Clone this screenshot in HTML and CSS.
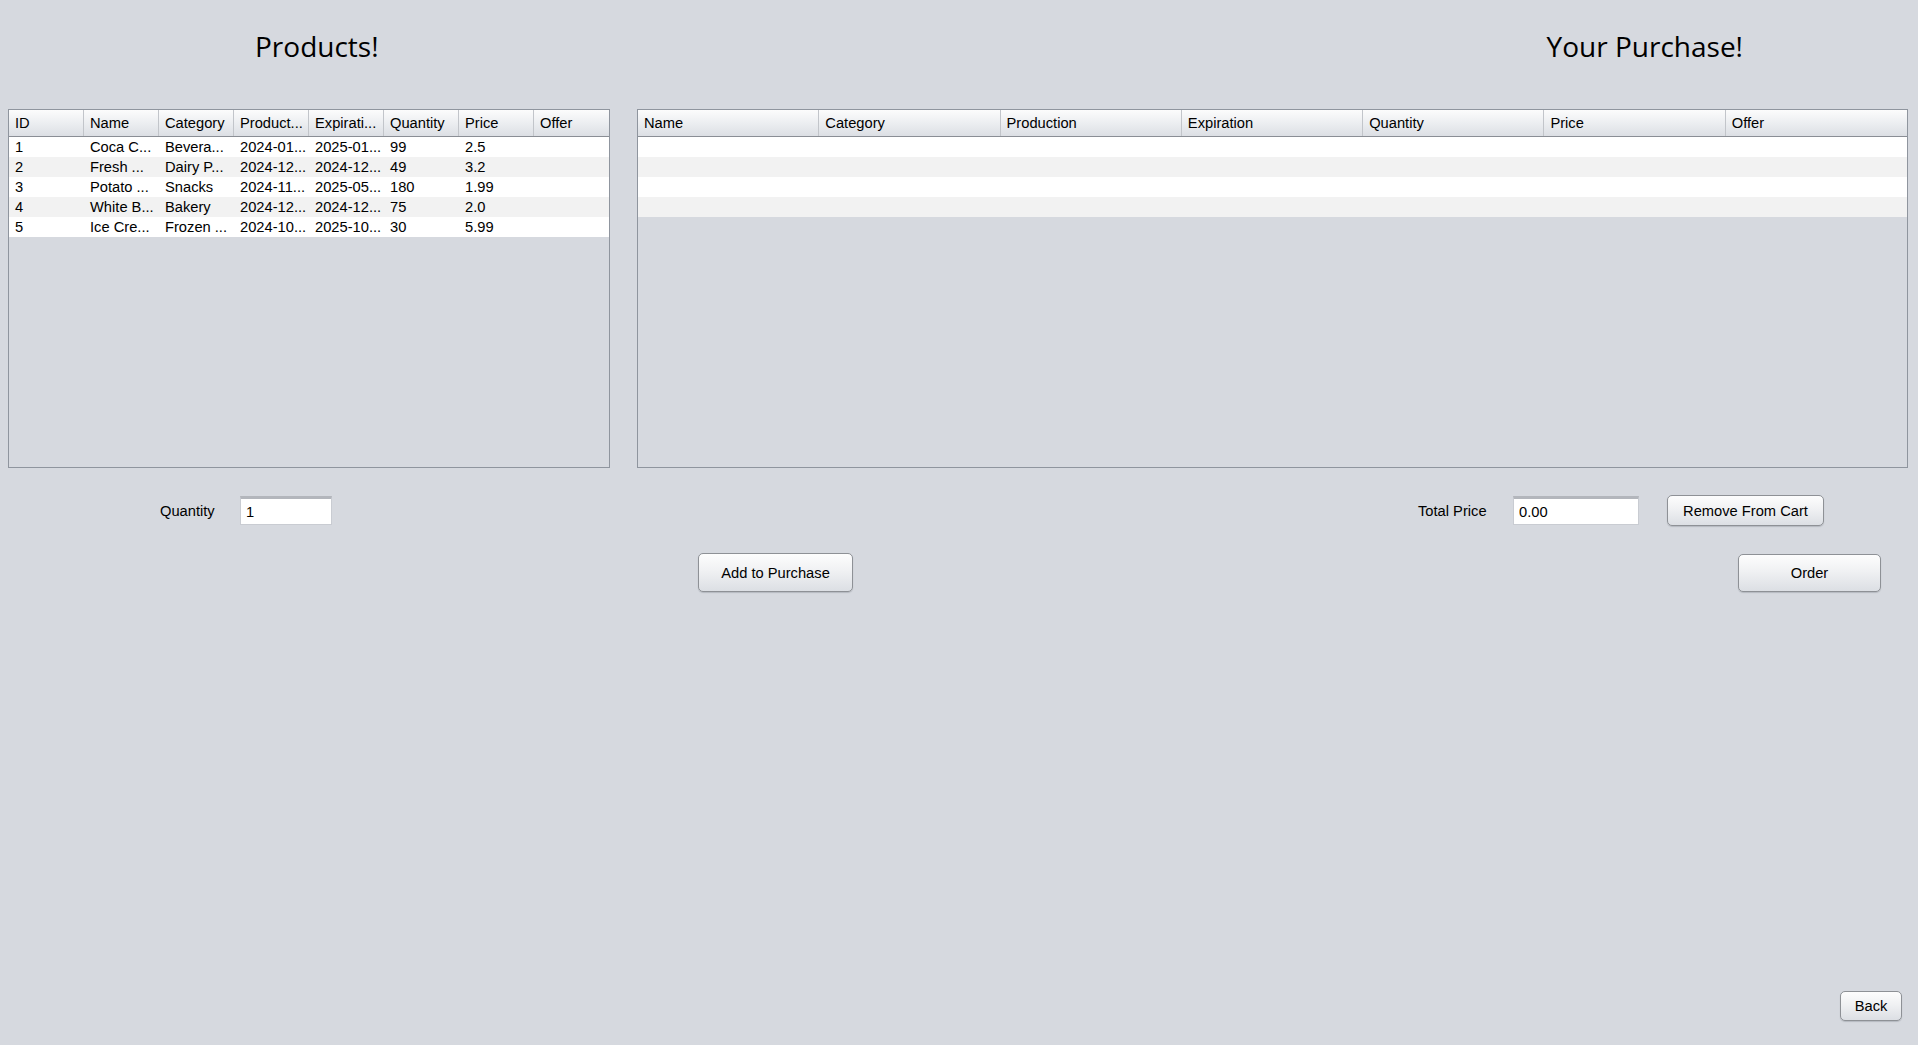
FILE: index.html
```html
<!DOCTYPE html>
<html lang="en">
  <head>
    <meta charset="UTF-8" />
    <meta name="viewport" content="width=device-width, initial-scale=1.0" />
    <title>Shop</title>
    <link rel="stylesheet" href="styles.css">
  </head>
  <body>
    <div class="frame">

      <div class="titles">
        <p class="title title-products">Products!</p>
        <p class="title title-purchase">Your Purchase!</p>
      </div>

      <div class="tables">
        <div class="pane pane-products">
          <div class="row head-row cols-8">
            <span>ID</span><span>Name</span><span>Category</span><span>Product...</span>
            <span>Expirati...</span><span>Quantity</span><span>Price</span><span>Offer</span>
          </div>
          <div class="row cols-8">
            <span>1</span><span>Coca C...</span><span>Bevera...</span><span>2024-01...</span>
            <span>2025-01...</span><span>99</span><span>2.5</span><span></span>
          </div>
          <div class="row cols-8">
            <span>2</span><span>Fresh ...</span><span>Dairy P...</span><span>2024-12...</span>
            <span>2024-12...</span><span>49</span><span>3.2</span><span></span>
          </div>
          <div class="row cols-8">
            <span>3</span><span>Potato ...</span><span>Snacks</span><span>2024-11...</span>
            <span>2025-05...</span><span>180</span><span>1.99</span><span></span>
          </div>
          <div class="row cols-8">
            <span>4</span><span>White B...</span><span>Bakery</span><span>2024-12...</span>
            <span>2024-12...</span><span>75</span><span>2.0</span><span></span>
          </div>
          <div class="row cols-8">
            <span>5</span><span>Ice Cre...</span><span>Frozen ...</span><span>2024-10...</span>
            <span>2025-10...</span><span>30</span><span>5.99</span><span></span>
          </div>
        </div>

        <div class="pane pane-cart">
          <div class="row head-row cols-7">
            <span>Name</span><span>Category</span><span>Production</span><span>Expiration</span>
            <span>Quantity</span><span>Price</span><span>Offer</span>
          </div>
          <div class="row cols-7"></div>
          <div class="row cols-7"></div>
          <div class="row cols-7"></div>
          <div class="row cols-7"></div>
        </div>
      </div>

      <div class="controls">
        <label class="lbl lbl-qty">Quantity</label>
        <input class="field field-qty" type="text" value="1"/>
        <label class="lbl lbl-total">Total Price</label>
        <input class="field field-total" type="text" value="0.00"/>
        <button class="btn btn-remove">Remove From Cart</button>
      </div>

      <div class="actions">
        <button class="btn btn-add">Add to Purchase</button>
        <button class="btn btn-order">Order</button>
      </div>

      <div class="bottom">
        <button class="btn btn-back">Back</button>
      </div>

    </div>
  </body>
</html>
```

FILE: styles.css
```css
body{
  margin: 0;
  background-color: #d6d9df;
  color: black;
  font-family: "Liberation Sans", Arial, sans-serif;
  font-size: 14.7px;
}
.frame{
  width: 1918px;
  height: 1045px;
  overflow: hidden;
}

/* headings */
.titles{
  display: flex;
  height: 109px;
}
.title{
  margin: 0;
  padding-top: 22px;
  font-family: "Open Sans", sans-serif;
  font-size: 28px;
  line-height: 48px;
}
.title-products{
  margin-left: 255px;
}
.title-purchase{
  margin-left: auto;
  margin-right: 175px;
}

/* the two tables */
.tables{
  display: flex;
  gap: 27px;
  padding-left: 8px;
}
.pane{
  height: 357px;
  border: 1px solid #8f959e;
  background-color: #d6d9df;
}
.pane-products{
  width: 600px;
}
.pane-cart{
  width: 1269px;
}
.row{
  display: grid;
  height: 20px;
  line-height: 20px;
  background-color: white;
}
.row:nth-child(odd){
  background-color: #f2f2f2;
}
.cols-8{
  grid-template-columns: repeat(8, 1fr);
}
.cols-7{
  grid-template-columns: repeat(7, 1fr);
}
.row span{
  padding-left: 6px;
  white-space: nowrap;
  overflow: hidden;
}
.row.head-row{
  height: 26px;
  line-height: 26px;
  background: linear-gradient(#fcfcfc, #eceef1 50%, #dcdfe4);
  border-bottom: 1px solid #8a8e95;
}
.head-row span{
  border-right: 1px solid #c2c5ca;
}
.head-row span:last-child{
  border-right: none;
}

/* form row */
.controls{
  display: flex;
  align-items: center;
  height: 31px;
  margin-top: 27px;
}
.lbl-qty{
  margin-left: 160px;
  width: 80px;
}
.field{
  box-sizing: border-box;
  height: 29px;
  padding: 0 5px;
  border: 1px solid #c9ccd2;
  border-top: 3px solid #b3b6bc;
  background-color: white;
  font-family: "Liberation Sans", Arial, sans-serif;
  font-size: 14.7px;
  outline: none;
}
.field-qty{
  width: 92px;
}
.lbl-total{
  margin-left: auto;
  width: 95px;
}
.field-total{
  width: 126px;
}

/* nimbus style buttons */
.btn{
  box-sizing: border-box;
  border: 1px solid #8e9196;
  border-radius: 5px;
  background: linear-gradient(#fdfdfd, #f0f1f3 45%, #dcdfe4);
  box-shadow: 0 1px 1px rgba(120, 125, 135, 0.35);
  color: black;
  font-family: "Liberation Sans", Arial, sans-serif;
  font-size: 14.7px;
  padding: 0;
}
.btn-remove{
  width: 157px;
  height: 31px;
  margin-left: 28px;
  margin-right: 94px;
}
.actions{
  display: flex;
  align-items: center;
  margin-top: 27px;
}
.btn-add{
  width: 155px;
  height: 39px;
  margin-left: 698px;
}
.btn-order{
  width: 143px;
  height: 38px;
  margin-left: auto;
  margin-right: 37px;
}
.bottom{
  display: flex;
  margin-top: 399px;
}
.btn-back{
  width: 62px;
  height: 30px;
  margin-left: auto;
  margin-right: 16px;
}
```
